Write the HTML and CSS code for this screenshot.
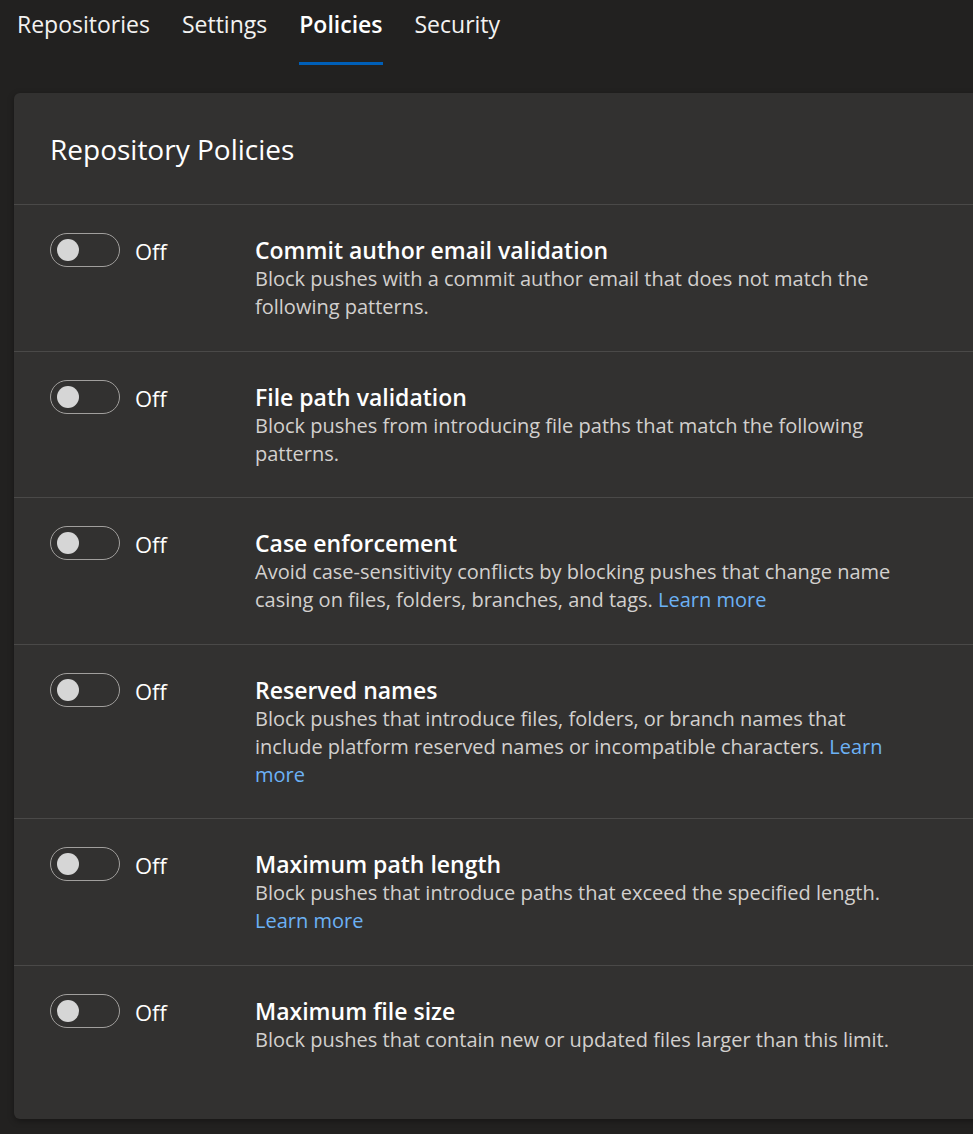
FILE: index.html
```html
<!DOCTYPE html>
<html lang="en">
<head>
<meta charset="utf-8">
<title>Repository Policies</title>
<link rel="stylesheet" href="styles.css">
</head>
<body>
<nav class="tabs">
  <a class="tab">Repositories</a>
  <a class="tab">Settings</a>
  <a class="tab active">Policies</a>
  <a class="tab">Security</a>
</nav>
<section class="card">
  <h1 class="card-title">Repository Policies</h1>
  <div class="row">
    <div class="toggle-col"><span class="toggle"><span class="knob"></span></span><span class="state">Off</span></div>
    <div class="text-col">
      <div class="title">Commit author email validation</div>
      <div class="desc">Block pushes with a commit author email that does not match the following patterns.</div>
    </div>
  </div>
  <div class="row">
    <div class="toggle-col"><span class="toggle"><span class="knob"></span></span><span class="state">Off</span></div>
    <div class="text-col">
      <div class="title">File path validation</div>
      <div class="desc">Block pushes from introducing file paths that match the following patterns.</div>
    </div>
  </div>
  <div class="row">
    <div class="toggle-col"><span class="toggle"><span class="knob"></span></span><span class="state">Off</span></div>
    <div class="text-col">
      <div class="title">Case enforcement</div>
      <div class="desc">Avoid case-sensitivity conflicts by blocking pushes that change name casing on files, folders, branches, and tags. <a class="link">Learn more</a></div>
    </div>
  </div>
  <div class="row">
    <div class="toggle-col"><span class="toggle"><span class="knob"></span></span><span class="state">Off</span></div>
    <div class="text-col">
      <div class="title">Reserved names</div>
      <div class="desc">Block pushes that introduce files, folders, or branch names that include platform reserved names or incompatible characters. <a class="link">Learn more</a></div>
    </div>
  </div>
  <div class="row">
    <div class="toggle-col"><span class="toggle"><span class="knob"></span></span><span class="state">Off</span></div>
    <div class="text-col">
      <div class="title">Maximum path length</div>
      <div class="desc">Block pushes that introduce paths that exceed the specified length. <a class="link">Learn more</a></div>
    </div>
  </div>
  <div class="row last">
    <div class="toggle-col"><span class="toggle"><span class="knob"></span></span><span class="state">Off</span></div>
    <div class="text-col">
      <div class="title">Maximum file size</div>
      <div class="desc">Block pushes that contain new or updated files larger than this limit.</div>
    </div>
  </div>
</section>
</body>
</html>
```
FILE: styles.css
```css
* { box-sizing: border-box; }
html, body { margin: 0; padding: 0; }
body {
  background: #222120;
  font-family: "Open Sans", "Noto Sans", sans-serif;
  color: #ffffff;
  overflow: hidden;
  height: 1134px;
}
.tabs {
  display: flex;
  gap: 32px;
  padding: 0 0 0 17px;
  height: 93px;
}
.tab {
  font-size: 23px;
  color: #f3f2f1;
  height: 65px;
  padding-top: 6px;
  line-height: 36px;
  border-bottom: 3px solid transparent;
}
.tab.active {
  font-weight: 600;
  border-bottom-color: #005fb8;
  color: #ffffff;
}
.card {
  margin-left: 14px;
  width: 990px;
  background: #323130;
  border-radius: 6px;
  box-shadow: 0 2px 6px rgba(0,0,0,0.35);
  padding-bottom: 36px;
}
.card-title {
  margin: 0;
  font-weight: 400;
  font-size: 28px;
  line-height: 40px;
  padding: 36px 36px 35px;
  border-bottom: 1px solid #4a4948;
}
.row {
  display: flex;
  padding: 30px 36px 29.5px;
  border-bottom: 1px solid #4a4948;
}
.row.last { border-bottom: none; }
.toggle-col {
  width: 205px;
  flex: none;
  display: flex;
  align-items: flex-start;
  gap: 15px;
}
.toggle {
  width: 70px;
  height: 34px;
  margin-top: -2px;
  border: 1.5px solid #a19f9d;
  border-radius: 17px;
  display: flex;
  align-items: center;
  padding-left: 6px;
}
.knob {
  width: 22px;
  height: 22px;
  border-radius: 50%;
  background: #d6d6d6;
}
.state {
  font-size: 22px;
  line-height: 32px;
  color: #ffffff;
}
.text-col { width: 650px; }
.title {
  font-size: 23px;
  font-weight: 600;
  line-height: 30px;
  color: #ffffff;
}
.desc {
  font-size: 20px;
  line-height: 28px;
  color: #d2d0ce;
}
.link { color: #6cb1f5; }
```
